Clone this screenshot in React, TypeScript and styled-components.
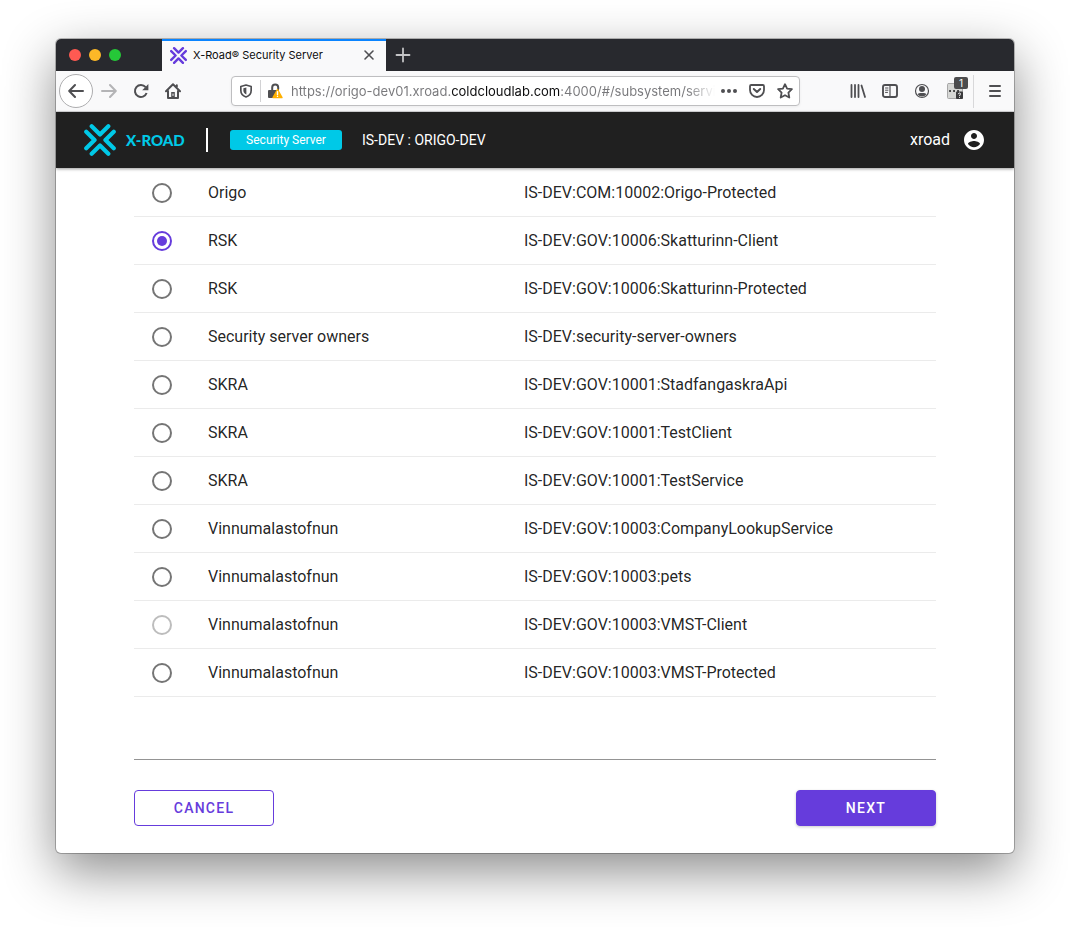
import React, { useState } from "react";
import styled, { createGlobalStyle } from "styled-components";

const color = {
  purple: "#663cdc",
  cyan: "#00c9e7",
  bar: "#202020",
  chrome: "#f9f9fa",
  icon: "#4f4f52",
};

const GlobalStyle = createGlobalStyle`
  *, *::before, *::after { box-sizing: border-box; }
  body {
    margin: 0;
    background: #fff;
    font-family: Roboto, sans-serif;
    color: rgba(0, 0, 0, 0.87);
  }
  button, input { font: inherit; }
`;

const Desktop = styled.div`
  padding: 39px 56px 74px;
`;

const BrowserWindow = styled.div`
  border-radius: 5px;
  overflow: hidden;
  background: #fff;
  box-shadow: 0 0 0 1px rgba(0, 0, 0, 0.25), 0 18px 52px rgba(0, 0, 0, 0.46);
`;

const PlainButton = styled.button`
  display: flex;
  align-items: center;
  justify-content: center;
  padding: 0;
  border: 0;
  background: none;
  color: inherit;
  cursor: pointer;
`;

/* Tab strip */

const TabStrip = styled.div`
  display: flex;
  align-items: stretch;
  height: 32px;
  background: #28292e;
`;

const WindowControls = styled.div`
  display: flex;
  align-items: center;
  gap: 8px;
  width: 106px;
  padding-left: 13px;
`;

const Light = styled(PlainButton)<{ $fill: string }>`
  width: 12px;
  height: 12px;
  border-radius: 50%;
  background: ${(p) => p.$fill};
`;

const Tab = styled.div`
  display: flex;
  align-items: center;
  gap: 6px;
  width: 224px;
  padding: 0 8px 2px;
  border-top: 2px solid #0a84ff;
  background: ${color.chrome};
  color: #0c0c0d;
  font: 11px/16px Inter, sans-serif;
`;

const TabIcon = styled.span`
  display: flex;
  color: ${color.purple};
`;

const TabTitle = styled.span`
  flex: 1;
  white-space: nowrap;
`;

const TabClose = styled(PlainButton)`
  width: 18px;
  height: 18px;
  color: ${color.icon};
`;

const NewTab = styled(PlainButton)`
  width: 34px;
  color: #c4c4c6;
`;

/* Navigation toolbar */

const Toolbar = styled.div`
  display: flex;
  align-items: center;
  height: 41px;
  padding: 0 3px;
  border-bottom: 1px solid #d8d8da;
  background: ${color.chrome};
  color: ${color.icon};
`;

const ToolButton = styled(PlainButton)<{ $dim?: boolean }>`
  width: 32px;
  height: 32px;
  color: ${(p) => (p.$dim ? "#b4b4b6" : "inherit")};
`;

const BackButton = styled(PlainButton)`
  width: 34px;
  height: 34px;
  border: 1px solid #adadaf;
  border-radius: 50%;
  background: #fff;
`;

const UrlBar = styled.div`
  display: flex;
  align-items: center;
  flex: 1;
  min-width: 0;
  height: 30px;
  margin: 0 42px;
  border: 1px solid #bebec0;
  border-radius: 4px;
  background: #fff;
  box-shadow: 0 1px 3px rgba(0, 0, 0, 0.06);
`;

const UrlButton = styled(PlainButton)`
  flex: none;
  width: 28px;
  height: 28px;
`;

const UrlRule = styled.span`
  width: 1px;
  height: 22px;
  background: #d2d2d4;
`;

/* The host name is darker than the rest, and the end of the address fades out. */
const UrlInput = styled.input`
  flex: 1;
  min-width: 0;
  height: 28px;
  margin-left: 2px;
  padding: 0;
  border: 0;
  outline: 0;
  font: 13px/20px Inter, sans-serif;
  color: transparent;
  caret-color: #000;
  background: linear-gradient(
    90deg,
    #77777a 161px,
    #0c0c0d 161px,
    #0c0c0d 270px,
    #77777a 270px,
    #77777a calc(100% - 28px),
    transparent
  );
  background-clip: text;
  -webkit-background-clip: text;
`;

const ToolRule = styled.span`
  width: 1px;
  height: 33px;
  margin: 0 5px 0 1px;
  background: #d8d8da;
`;

const ExtensionButton = styled(ToolButton)`
  position: relative;
  width: 34px;
`;

const Count = styled.span`
  position: absolute;
  top: 2px;
  right: 4px;
  width: 14px;
  height: 12px;
  border-radius: 2px;
  background: #4c4c4e;
  color: #fff;
  font: 10px/12px Inter, sans-serif;
  text-align: center;
`;

/* Application header */

const AppBar = styled.header`
  position: relative;
  display: flex;
  align-items: center;
  height: 56px;
  padding: 0 28px;
  background: ${color.bar};
  color: #fff;
  box-shadow: 0 1px 3px rgba(0, 0, 0, 0.4);
`;

const Brand = styled.a`
  display: flex;
  align-items: center;
  gap: 10px;
  width: 122px;
  color: ${color.cyan};
  font: 900 15px/20px Lato, sans-serif;
  text-decoration: none;
  white-space: nowrap;
`;

const BrandRule = styled.span`
  width: 2px;
  height: 24px;
  margin-right: 22px;
  background: #fff;
`;

const Badge = styled.span`
  width: 112px;
  margin-right: 20px;
  border-radius: 3px;
  background: ${color.cyan};
  font-size: 12px;
  line-height: 20px;
  text-align: center;
`;

const ServerName = styled.span`
  flex: 1;
  font-size: 14px;
  line-height: 20px;
`;

const UserButton = styled(PlainButton)`
  gap: 12px;
  font-size: 16px;
  line-height: 24px;
`;

/* Page */

const Page = styled.main`
  padding: 1px 78px 27px;
`;

const ClientTable = styled.table`
  width: 100%;
  table-layout: fixed;
  border-spacing: 0;
  font-size: 16px;
  line-height: 24px;
`;

const Cell = styled.td<{ $width?: string }>`
  width: ${(p) => p.$width ?? "auto"};
  height: 48px;
  padding: 0;
  border-bottom: 1px solid #ebebeb;
`;

const RadioCell = styled(Cell)`
  padding-left: 18px;
`;

const Radio = styled.input`
  display: grid;
  place-items: center;
  appearance: none;
  width: 20px;
  height: 20px;
  margin: 0;
  border: 2px solid #757575;
  border-radius: 50%;

  &:checked {
    border-color: ${color.purple};
  }
  &:checked::before {
    content: "";
    width: 10px;
    height: 10px;
    border-radius: 50%;
    background: ${color.purple};
  }
  &:disabled {
    border-color: #bdbdbd;
  }
`;

const Actions = styled.footer`
  display: flex;
  justify-content: space-between;
  margin-top: 62px;
  padding-top: 30px;
  border-top: 1px solid #949494;
`;

const ActionButton = styled.button<{ $primary?: boolean }>`
  width: 140px;
  height: 36px;
  padding: 0;
  border: 1px solid ${color.purple};
  border-radius: 4px;
  background: ${(p) => (p.$primary ? color.purple : "#fff")};
  color: ${(p) => (p.$primary ? "#fff" : color.purple)};
  box-shadow: ${(p) => (p.$primary ? "0 1px 3px rgba(0, 0, 0, 0.2)" : "none")};
  font-size: 14px;
  font-weight: 500;
  letter-spacing: 0.09em;
  text-transform: uppercase;
  cursor: pointer;
`;

const XRoadMark = ({ size, stroke = 13 }: { size: number; stroke?: number }) => (
  <svg width={size} height={size} viewBox="0 0 100 100" fill="none" stroke="currentColor"
    strokeWidth={stroke} strokeLinecap="round" strokeLinejoin="round" aria-hidden="true">
    <path d="M24 7l26 26L76 7M24 93l26-26 26 26M7 24l26 26L7 76M93 24L67 50l26 26" />
  </svg>
);

const Icon = ({ children, size = 16 }: { children: React.ReactNode; size?: number }) => (
  <svg width={size} height={size} viewBox="0 0 16 16" fill="none" stroke="currentColor"
    strokeWidth="2" strokeLinecap="round" strokeLinejoin="round" aria-hidden="true">
    {children}
  </svg>
);

const clients = [
  ["Origo", "IS-DEV:COM:10002:Origo-Protected"],
  ["RSK", "IS-DEV:GOV:10006:Skatturinn-Client"],
  ["RSK", "IS-DEV:GOV:10006:Skatturinn-Protected"],
  ["Security server owners", "IS-DEV:security-server-owners"],
  ["SKRA", "IS-DEV:GOV:10001:StadfangaskraApi"],
  ["SKRA", "IS-DEV:GOV:10001:TestClient"],
  ["SKRA", "IS-DEV:GOV:10001:TestService"],
  ["Vinnumalastofnun", "IS-DEV:GOV:10003:CompanyLookupService"],
  ["Vinnumalastofnun", "IS-DEV:GOV:10003:pets"],
  ["Vinnumalastofnun", "IS-DEV:GOV:10003:VMST-Client"],
  ["Vinnumalastofnun", "IS-DEV:GOV:10003:VMST-Protected"],
];

const unavailable = "IS-DEV:GOV:10003:VMST-Client";

const BrowserChrome = () => (
  <>
    <TabStrip>
      <WindowControls>
        <Light $fill="#ff5a52" aria-label="Close window" />
        <Light $fill="#fdb827" aria-label="Minimize window" />
        <Light $fill="#25c838" aria-label="Zoom window" />
      </WindowControls>
      <Tab>
        <TabIcon>
          <XRoadMark size={17} stroke={14} />
        </TabIcon>
        <TabTitle>X-Road® Security Server</TabTitle>
        <TabClose aria-label="Close tab">
          <Icon><path d="M4 4l8 8M12 4l-8 8" strokeWidth="1.6" /></Icon>
        </TabClose>
      </Tab>
      <NewTab aria-label="New tab">
        <Icon><path d="M8 1.5v13M1.5 8h13" strokeWidth="1.8" /></Icon>
      </NewTab>
    </TabStrip>
    <Toolbar>
      <BackButton aria-label="Back">
        <Icon><path d="M15 8H1.5M7 2L1.2 8 7 14" /></Icon>
      </BackButton>
      <ToolButton $dim aria-label="Forward">
        <Icon><path d="M1 8h13.5M9 2l5.8 6L9 14" /></Icon>
      </ToolButton>
      <ToolButton aria-label="Reload">
        <Icon>
          <path d="M12.6 4.2A6 6 0 1 0 13.6 10" strokeLinecap="butt" />
          <path d="M15.4 1v6.2H9.2z" fill="currentColor" stroke="none" />
        </Icon>
      </ToolButton>
      <ToolButton aria-label="Home">
        <Icon>
          <path d="M1 8.2L8 1.3l7 6.9M3 8v6.9h10V8M11.8 2.2v2" />
          <path d="M6.2 9h3.6v6H6.2z" fill="currentColor" stroke="none" />
          <path d="M8 11v1.5" stroke="#f9f9fa" strokeWidth="1" />
        </Icon>
      </ToolButton>
      <UrlBar>
        <UrlButton aria-label="Tracking protection">
          <Icon size={14}>
            <path d="M8 1.2l5.9 1.7v4.6c0 3.6-2.6 6.3-5.9 7.4-3.3-1.1-5.9-3.8-5.9-7.4V2.9z" strokeWidth="1.9" />
            <path d="M8.4 4v8C6 11 5 9.4 5 7.4V4.8z" fill="currentColor" stroke="none" />
          </Icon>
        </UrlButton>
        <UrlRule />
        <UrlButton aria-label="Connection is not fully secure">
          <Icon>
            <path d="M5.2 8V4.6a3 3 0 0 1 6 0V6" />
            <rect x="1" y="7" width="11" height="8" rx="1" fill="currentColor" stroke="none" />
            <path d="M10.5 6.6L15 14.6H6z" fill="#ffb000" stroke="#ffb000" strokeWidth="1.4" />
            <path d="M10.5 8.6v2.8M10.5 13.3v.1" stroke="#fff" strokeWidth="1.4" />
          </Icon>
        </UrlButton>
        <UrlInput type="text" aria-label="Address"
          defaultValue="https://origo-dev01.xroad.coldcloudlab.com:4000/#/subsystem/serviceclients" />
        <UrlButton aria-label="Page actions">
          <Icon>
            <g fill="currentColor" stroke="none">
              <circle cx="2" cy="8" r="2" /><circle cx="8" cy="8" r="2" /><circle cx="14" cy="8" r="2" />
            </g>
          </Icon>
        </UrlButton>
        <UrlButton aria-label="Save to Pocket">
          <Icon>
            <path d="M2.2 2h11.6c.7 0 1.2.5 1.2 1.2V7A7 7 0 0 1 1 7V3.2C1 2.5 1.5 2 2.2 2z" strokeWidth="1.8" />
            <path d="M4.8 6L8 9l3.2-3" />
          </Icon>
        </UrlButton>
        <UrlButton aria-label="Bookmark this page">
          <Icon>
            <path d="M8 1.2l2.1 4.4 4.8.6-3.5 3.4.9 4.9L8 12.2l-4.3 2.3.9-4.9L1.1 6.2l4.8-.6z" strokeWidth="1.8" />
          </Icon>
        </UrlButton>
      </UrlBar>
      <ToolButton aria-label="Library">
        <Icon><path d="M1.5 2v12M5 2v12M8.5 2v12M11.5 2.5L15 14" strokeWidth="1.8" /></Icon>
      </ToolButton>
      <ToolButton aria-label="Sidebars">
        <Icon>
          <rect x="1" y="2" width="14" height="12" rx="2" strokeWidth="1.9" />
          <path d="M8 2v12" strokeWidth="1.2" />
          <path d="M3.5 5h2.5M3.5 7.2h2.5M3.5 9.4h2" strokeWidth="1" />
        </Icon>
      </ToolButton>
      <ToolButton aria-label="Account">
        <Icon>
          <circle cx="8" cy="8" r="6.5" strokeWidth="1.2" />
          <circle cx="8" cy="6" r="3" fill="currentColor" stroke="none" />
          <path d="M3.6 11.2C5 9.7 6.6 10 8 10s3-.3 4.4 1.2A5.5 5.5 0 0 1 3.6 11.2z" fill="currentColor" stroke="none" />
        </Icon>
      </ToolButton>
      <ExtensionButton aria-label="Extension">
        <Icon>
          <rect x="0.5" y="0.5" width="15" height="15" rx="1" fill="#d6d7d5" stroke="#a8a8a8" strokeWidth="1" />
          <path d="M3 8h.1M7 8h.1M11 8h.1" stroke="#2a2a2a" />
          <rect x="9" y="8.5" width="7" height="7.5" rx="1" fill="#3a3a3c" stroke="none" />
          <path d="M11.3 10.8c.3-1.2 2.4-1 2.2.3-.1.7-1 .8-1 1.5M12.5 14.3v.1" stroke="#fff" strokeWidth="1" />
        </Icon>
        <Count>1</Count>
      </ExtensionButton>
      <ToolRule />
      <ToolButton aria-label="Menu">
        <Icon><path d="M3 3h10M3 8h10M3 13h10" /></Icon>
      </ToolButton>
    </Toolbar>
  </>
);

export default function App() {
  const [selected, setSelected] = useState("IS-DEV:GOV:10006:Skatturinn-Client");

  return (
    <>
      <GlobalStyle />
      <Desktop>
        <BrowserWindow>
          <BrowserChrome />
          <AppBar>
            <Brand href="#">
              <XRoadMark size={32} />
              X-ROAD
            </Brand>
            <BrandRule />
            <Badge>Security Server</Badge>
            <ServerName>IS-DEV : ORIGO-DEV</ServerName>
            <UserButton>
              xroad
              <svg width="24" height="24" viewBox="0 0 24 24" fill="currentColor" aria-hidden="true">
                <path d="M12 2C6.48 2 2 6.48 2 12s4.48 10 10 10 10-4.48 10-10S17.52 2 12 2zm0 3c1.66 0 3 1.34 3 3s-1.34 3-3 3-3-1.34-3-3 1.34-3 3-3zm0 14.2c-2.5 0-4.71-1.28-6-3.22.03-1.99 4-3.08 6-3.08 1.99 0 5.97 1.09 6 3.08-1.29 1.94-3.5 3.22-6 3.22z" />
              </svg>
            </UserButton>
          </AppBar>
          <Page>
            <ClientTable>
              <tbody>
                {clients.map(([name, id]) => (
                  <tr key={id}>
                    <RadioCell $width="74px">
                      <Radio type="radio" name="client" id={id} value={id}
                        checked={selected === id} disabled={id === unavailable}
                        onChange={() => setSelected(id)} />
                    </RadioCell>
                    <Cell $width="316px"><label htmlFor={id}>{name}</label></Cell>
                    <Cell>{id}</Cell>
                  </tr>
                ))}
              </tbody>
            </ClientTable>
            <Actions>
              <ActionButton type="button">Cancel</ActionButton>
              <ActionButton type="button" $primary>Next</ActionButton>
            </Actions>
          </Page>
        </BrowserWindow>
      </Desktop>
    </>
  );
}
